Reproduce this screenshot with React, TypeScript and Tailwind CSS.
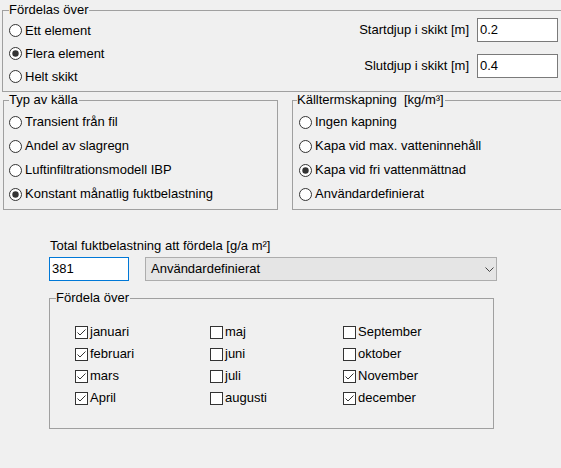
import React from 'react';

const Radio = ({ checked }: { checked?: boolean }) => (
    <svg width="13" height="13" viewBox="0 0 13 13" className="shrink-0">
        <circle cx="6.5" cy="6.5" r="6" fill="#fff" stroke="#333" strokeWidth="1" />
        {checked && <circle cx="6.5" cy="6.5" r="3.2" fill="#333" />}
    </svg>
);

const Check = ({ checked }: { checked?: boolean }) => (
    <svg width="13" height="13" viewBox="0 0 13 13" className="shrink-0">
        <rect x="0.5" y="0.5" width="12" height="12" fill="#fff" stroke="#333" strokeWidth="1" />
        {checked && <polyline points="2.5,6.5 5,9 10.5,3.5" fill="none" stroke="#333" strokeWidth="1" />}
    </svg>
);

const RadioRow = ({ label, checked, h }: { label: string; checked?: boolean; h: string }) => (
    <div className={`flex items-center ${h}`}>
        <Radio checked={checked} />
        <span className="ml-[3px] whitespace-nowrap">{label}</span>
    </div>
);

const Legend = ({ children, ml }: { children: React.ReactNode; ml: string }) => (
    <legend className={`${ml} px-0 pr-[1px] leading-[16px] whitespace-pre`}>{children}</legend>
);

const months: { name: string; on: boolean }[] = [
    { name: 'januari', on: true },
    { name: 'februari', on: true },
    { name: 'mars', on: true },
    { name: 'April', on: true },
    { name: 'maj', on: false },
    { name: 'juni', on: false },
    { name: 'juli', on: false },
    { name: 'augusti', on: false },
    { name: 'September', on: false },
    { name: 'oktober', on: false },
    { name: 'November', on: true },
    { name: 'december', on: true },
];

export default function App() {
    return (
        <div className="w-[561px] h-[468px] overflow-hidden bg-[#f0f0f0] text-[13px] text-black font-['Liberation_Sans',Arial,sans-serif]">
            {/* Fördelas över */}
            <fieldset className="ml-[2px] mt-[2px] w-[600px] h-[90px] border border-[#a0a0a0] p-0">
                <Legend ml="ml-[6px]">Fördelas över</Legend>
                <div className="flex w-[555px]">
                    <div className="flex flex-col ml-[6px] pt-[1px]">
                        <RadioRow h="h-[23px]" label="Ett element" />
                        <RadioRow h="h-[23px]" label="Flera element" checked />
                        <RadioRow h="h-[23px]" label="Helt skikt" />
                    </div>
                    <div className="ml-auto flex flex-col gap-[12px]">
                        <div className="flex items-center justify-end">
                            <span className="mr-[8px]">Startdjup i skikt [m]</span>
                            <div className="w-[81px] h-[24px] bg-white border border-[#7a7a7a] pl-[2px] flex items-center">0.2</div>
                        </div>
                        <div className="flex items-center justify-end">
                            <span className="mr-[8px]">Slutdjup i skikt [m]</span>
                            <div className="w-[81px] h-[24px] bg-white border border-[#7a7a7a] pl-[2px] flex items-center">0.4</div>
                        </div>
                    </div>
                </div>
            </fieldset>

            {/* Typ av källa / Källtermskapning */}
            <div className="flex">
                <fieldset className="shrink-0 ml-[3px] w-[275px] h-[118px] border border-[#a0a0a0] p-0">
                    <Legend ml="ml-[5px]">Typ av källa</Legend>
                    <div className="flex flex-col pl-[5px] pt-[2px]">
                        <RadioRow h="h-[24px]" label="Transient från fil" />
                        <RadioRow h="h-[24px]" label="Andel av slagregn" />
                        <RadioRow h="h-[24px]" label="Luftinfiltrationsmodell IBP" />
                        <RadioRow h="h-[24px]" label="Konstant månatlig fuktbelastning" checked />
                    </div>
                </fieldset>
                <fieldset className="shrink-0 ml-[14px] w-[300px] h-[118px] border border-[#a0a0a0] p-0">
                    <Legend ml="ml-[4px]">Källtermskapning  [kg/m³]</Legend>
                    <div className="flex flex-col pl-[6px] pt-[2px]">
                        <RadioRow h="h-[24px]" label="Ingen kapning" />
                        <RadioRow h="h-[24px]" label="Kapa vid max. vatteninnehåll" />
                        <RadioRow h="h-[24px]" label="Kapa vid fri vattenmättnad" checked />
                        <RadioRow h="h-[24px]" label="Användardefinierat" />
                    </div>
                </fieldset>
            </div>

            {/* Total fuktbelastning */}
            <div className="ml-[50px] mt-[28px] leading-[16px]">Total fuktbelastning att fördela [g/a m²]</div>
            <div className="flex ml-[49px] mt-[3px] gap-[16px]">
                <div className="w-[80px] h-[24px] bg-white border border-[#0078d7] pl-[2px] flex items-center">381</div>
                <div className="w-[352px] h-[24px] bg-[#e5e5e5] border border-[#adadad] pl-[5px] pr-[2px] flex items-center">
                    <span>Användardefinierat</span>
                    <svg width="9" height="5" viewBox="0 0 9 5" className="ml-auto">
                        <polyline points="0.5,0.5 4.5,4.5 8.5,0.5" fill="none" stroke="#444" strokeWidth="1" />
                    </svg>
                </div>
            </div>

            {/* Fördela över */}
            <fieldset className="ml-[49px] mt-[9px] w-[445px] h-[139px] border border-[#a0a0a0] p-0">
                <Legend ml="ml-[6px]">Fördela över</Legend>
                <div className="grid grid-flow-col grid-rows-4 grid-cols-[135px_133px_auto] pl-[25px] pt-[15px]">
                    {months.map((m) => (
                        <div key={m.name} className="flex items-center h-[22px]">
                            <Check checked={m.on} />
                            <span className="ml-[2px]">{m.name}</span>
                        </div>
                    ))}
                </div>
            </fieldset>
        </div>
    );
}
